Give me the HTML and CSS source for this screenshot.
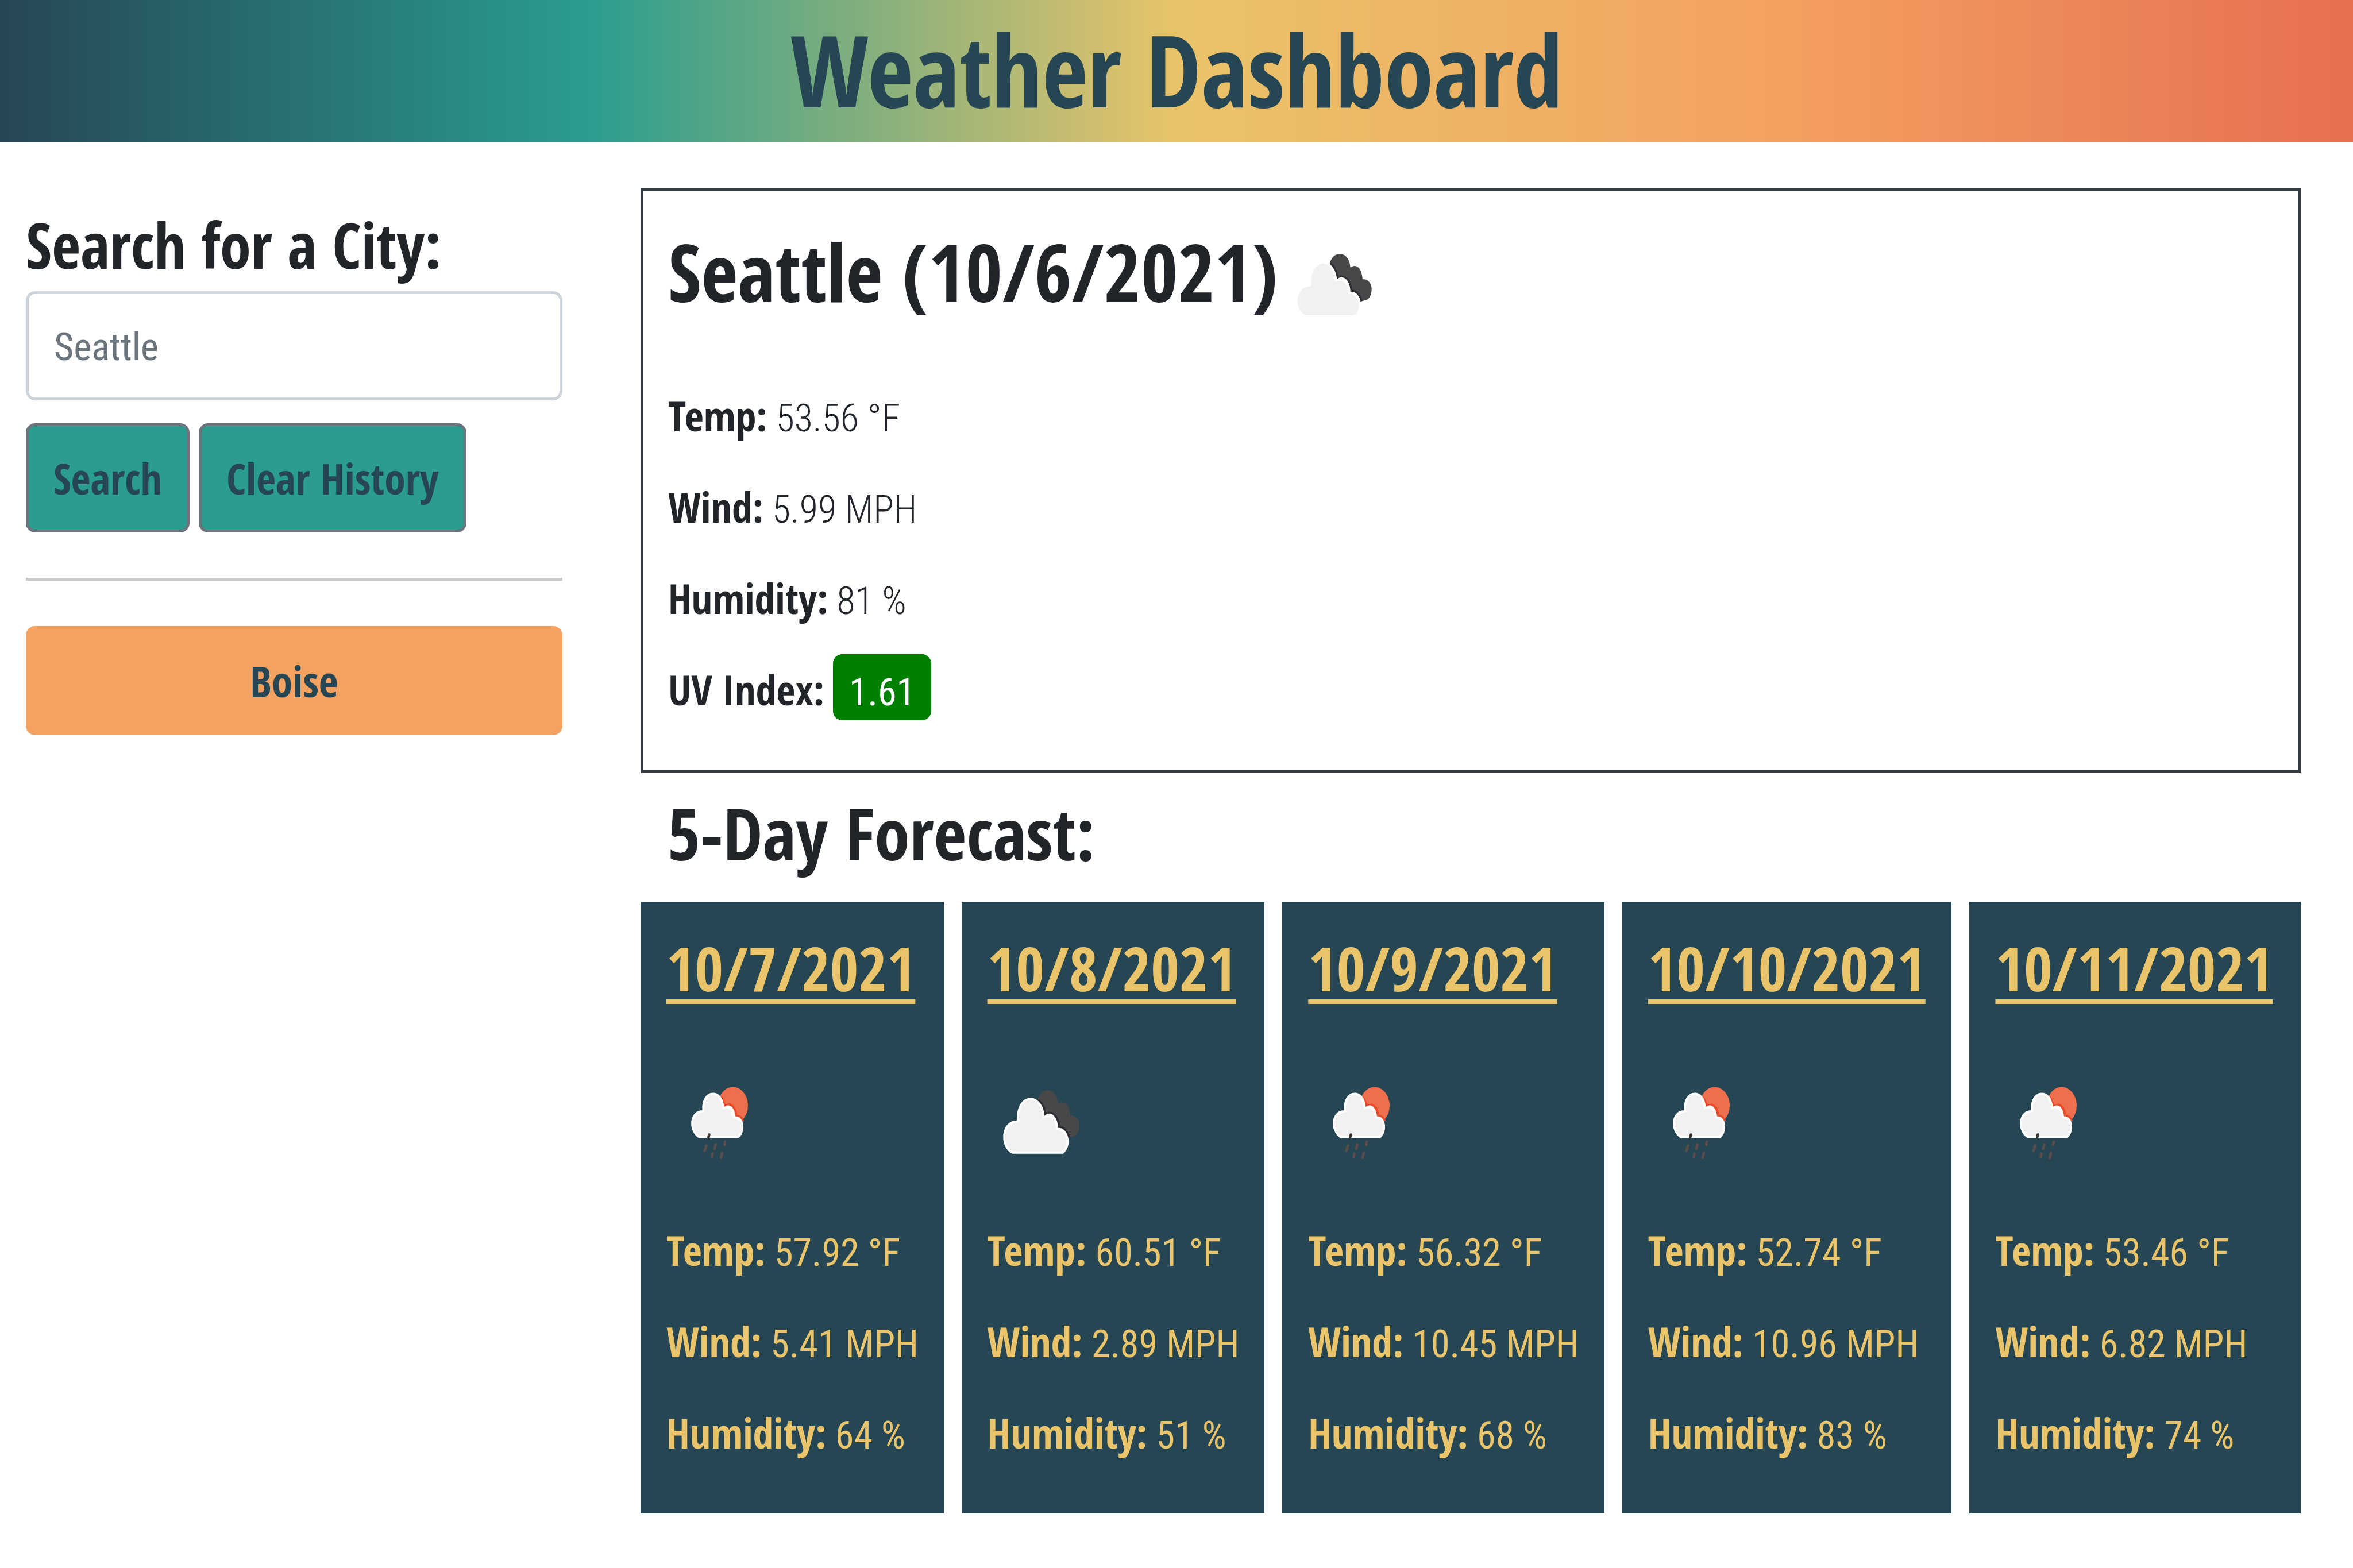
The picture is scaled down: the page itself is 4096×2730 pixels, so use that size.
FILE: index.html
```html
<!DOCTYPE html>
<html lang="en">
<head>
  <meta charset="utf-8">
  <meta name="viewport" content="width=device-width, initial-scale=1">
  <title>Weather Dashboard</title>
  <link rel="stylesheet" href="styles.css">
</head>
<body>
  <svg class="sprite" aria-hidden="true">
    <symbol id="clouds" viewBox="0 0 810 840">
      <clipPath id="rear-cloud">
        <path d="M385 240C400 205 425 180 460 180C505 180 535 220 540 285C585 250 630 290 633 375C675 370 703 405 703 450C703 500 680 535 650 537L560 560L400 400Z"/>
      </clipPath>
      <path fill="#48484a" d="M385 240C400 205 425 180 460 180C505 180 535 220 540 285C585 250 630 290 633 375C675 370 703 405 703 450C703 500 680 535 650 537L560 560L400 400Z"/>
      <path clip-path="url(#rear-cloud)" fill="#2b2d30" stroke="#2b2d30" stroke-width="30" d="M190 665C150 650 120 600 120 540C120 465 165 410 225 412C220 310 265 240 330 240C385 240 430 295 438 378C470 335 540 370 540 470C590 465 622 520 622 575C622 615 605 645 580 665Z"/>
      <path fill="#fff" d="M190 668C150 650 120 600 120 540C120 465 165 410 225 412C220 310 265 240 330 240C385 240 430 295 438 378C470 335 540 370 540 470C590 465 622 520 622 575C622 615 605 645 580 668Z"/>
      <path fill="#f1f1f1" d="M196 650C160 635 134 590 134 540C134 475 180 428 240 428C234 325 275 254 330 254C375 254 415 310 424 396C470 370 520 385 526 486C570 480 606 530 606 575C606 610 590 636 570 650Z"/>
    </symbol>
    <symbol id="rain" viewBox="0 0 810 840">
      <ellipse cx="510" cy="298" rx="115" ry="142" fill="#ee6f4d"/>
      <path fill="none" stroke="#ea4a28" stroke-width="16" d="M418 232C436 256 444 280 450 302C490 270 532 310 536 374C560 374 578 392 588 420"/>
      <path fill="#fff" d="M245 545C210 520 190 480 190 435C190 380 225 332 275 335C270 255 305 200 358 200C405 200 438 245 442 310C475 275 525 310 527 380C570 378 592 420 590 465C590 500 575 530 555 545Z"/>
      <path fill="#f1f1f1" d="M252 530C220 508 205 475 205 435C205 388 240 350 290 350C286 270 315 215 358 215C392 215 424 260 428 328C470 308 508 325 513 395C555 395 576 430 576 465C576 494 562 518 546 530Z"/>
      <g fill="none" stroke-linecap="round" stroke-width="20">
        <path stroke="#3b3634" d="M328 520L322 544"/>
        <path stroke="#5a4d4c" d="M306 605L294 645M377 598L368 630M450 575L446 598M354 668L350 692M427 662L418 698"/>
      </g>
    </symbol>
  </svg>

  <header class="header">
    <h1>Weather Dashboard</h1>
  </header>

  <div class="layout">
    <aside class="sidebar">
      <form class="search">
        <label class="search-title" for="city">Search for a City:</label>
        <input class="search-input" id="city" type="text" placeholder="Seattle">
        <div class="search-actions">
          <button class="btn btn-search" type="button">Search</button>
          <button class="btn btn-search" type="button">Clear History</button>
        </div>
      </form>
      <hr class="divider">
      <button class="btn btn-city" type="button">Boise</button>
    </aside>

    <main class="main">
      <section class="current">
        <h2 class="current-title">Seattle (10/6/2021) <svg class="icon" role="img" aria-label="Broken clouds"><use href="#clouds"/></svg></h2>
        <p><strong>Temp:</strong> 53.56 °F</p>
        <p><strong>Wind:</strong> 5.99 MPH</p>
        <p><strong>Humidity:</strong> 81 %</p>
        <p><strong>UV Index:</strong> <span class="badge">1.61</span></p>
      </section>

      <h3 class="forecast-title">5-Day Forecast:</h3>
      <section class="forecast">
        <article class="day">
          <h4>10/7/2021</h4>
          <svg class="icon" role="img" aria-label="Rain"><use href="#rain"/></svg>
          <p><strong>Temp:</strong> 57.92 °F</p>
          <p><strong>Wind:</strong> 5.41 MPH</p>
          <p><strong>Humidity:</strong> 64 %</p>
        </article>
        <article class="day">
          <h4>10/8/2021</h4>
          <svg class="icon" role="img" aria-label="Broken clouds"><use href="#clouds"/></svg>
          <p><strong>Temp:</strong> 60.51 °F</p>
          <p><strong>Wind:</strong> 2.89 MPH</p>
          <p><strong>Humidity:</strong> 51 %</p>
        </article>
        <article class="day">
          <h4>10/9/2021</h4>
          <svg class="icon" role="img" aria-label="Rain"><use href="#rain"/></svg>
          <p><strong>Temp:</strong> 56.32 °F</p>
          <p><strong>Wind:</strong> 10.45 MPH</p>
          <p><strong>Humidity:</strong> 68 %</p>
        </article>
        <article class="day">
          <h4>10/10/2021</h4>
          <svg class="icon" role="img" aria-label="Rain"><use href="#rain"/></svg>
          <p><strong>Temp:</strong> 52.74 °F</p>
          <p><strong>Wind:</strong> 10.96 MPH</p>
          <p><strong>Humidity:</strong> 83 %</p>
        </article>
        <article class="day">
          <h4>10/11/2021</h4>
          <svg class="icon" role="img" aria-label="Rain"><use href="#rain"/></svg>
          <p><strong>Temp:</strong> 53.46 °F</p>
          <p><strong>Wind:</strong> 6.82 MPH</p>
          <p><strong>Humidity:</strong> 74 %</p>
        </article>
      </section>
    </main>
  </div>
</body>
</html>
```
FILE: styles.css
```css
:root {
  --navy: #264653;
  --teal: #2a9d8f;
  --gold: #e9c46a;
  --orange: #f4a261;
  --coral: #e76f51;
  --ink: #212529;
  --heading: "Open Sans Condensed", "Roboto Condensed", "Open Sans", sans-serif;
  --text: "Roboto Condensed", "Open Sans", sans-serif;
}

* {
  box-sizing: border-box;
}

body {
  margin: 0;
  background: #fff;
  color: var(--ink);
  font: 400 66px/119px var(--text);
}

h1, h2, h3, h4, p {
  margin: 0;
}

h1, h2, h3, h4, strong, .search-title, .btn {
  font-family: var(--heading);
  font-weight: 700;
}

strong {
  font-size: 72px;
  line-height: 1;
}

p {
  margin-bottom: 40px;
  white-space: nowrap;
}

.sprite {
  position: absolute;
  width: 0;
  height: 0;
}

.icon {
  display: block;
  flex: none;
  width: 184px;
  height: 191px;
}

.header {
  padding: 0 0 8px;
  background: linear-gradient(to right, var(--navy), var(--teal), var(--gold), var(--orange), var(--coral));
  color: var(--navy);
  text-align: center;
}

.header h1 {
  font-size: 173px;
  line-height: 240px;
}

.layout {
  display: grid;
  grid-template-columns: 25% minmax(0, 1fr);
  align-items: start;
  padding-top: 80px;
}

/* Search column */

.sidebar {
  padding: 24px 45px 0;
}

.search {
  display: flex;
  flex-direction: column;
}

.search-title {
  margin-bottom: 8px;
  font-size: 109px;
  line-height: 147px;
}

.search-input {
  width: 100%;
  height: 190px;
  padding: 4px 44px 0;
  border: 5px solid #ced4da;
  border-radius: 16px;
  background: #fff;
  color: var(--ink);
  font: 400 66px/119px var(--text);
}

.search-input::placeholder {
  color: #6c757d;
  opacity: 1;
}

.search-actions {
  display: flex;
  gap: 16px;
  margin-top: 40px;
}

.btn {
  height: 190px;
  padding: 0 43px;
  border: 5px solid transparent;
  border-radius: 16px;
  color: var(--navy);
  font-size: 74px;
  line-height: 119px;
}

.btn-search {
  border-color: #6c757d;
  background: var(--teal);
}

.btn-city {
  width: 100%;
  border-color: var(--orange);
  background: var(--orange);
}

.divider {
  height: 5px;
  margin: 79px 0;
  border: 0;
  background: #c8cccf;
}

/* Current weather */

.main {
  padding: 0 91px;
}

.current {
  padding: 44px 43px 36px;
  border: 5px solid #343a40;
  font-weight: 300;
}

.current-title {
  display: flex;
  gap: 4px;
  align-items: flex-start;
  margin-bottom: 77px;
  font-size: 139px;
  line-height: 191px;
}

.current-title .icon {
  margin-top: 24px;
}

.badge {
  padding: 28px 28px 10px;
  border-radius: 16px;
  background: green;
  color: #fff;
  font-weight: 400;
}

/* Forecast */

.forecast-title {
  padding: 16px 47px 32px;
  font-size: 124px;
  line-height: 176px;
}

.forecast {
  display: grid;
  grid-template-columns: 528fr 528fr 561fr 574fr 577fr;
  gap: 31px;
}

.day {
  min-width: 0;
  padding: 40px 45px 36px;
  background: var(--navy);
  color: var(--gold);
}

.day h4 {
  font-size: 107px;
  line-height: 150px;
  text-decoration: underline;
  text-decoration-thickness: 8px;
  text-underline-offset: 14px;
}

.day .icon {
  margin: 97px 0 74px;
}
```
